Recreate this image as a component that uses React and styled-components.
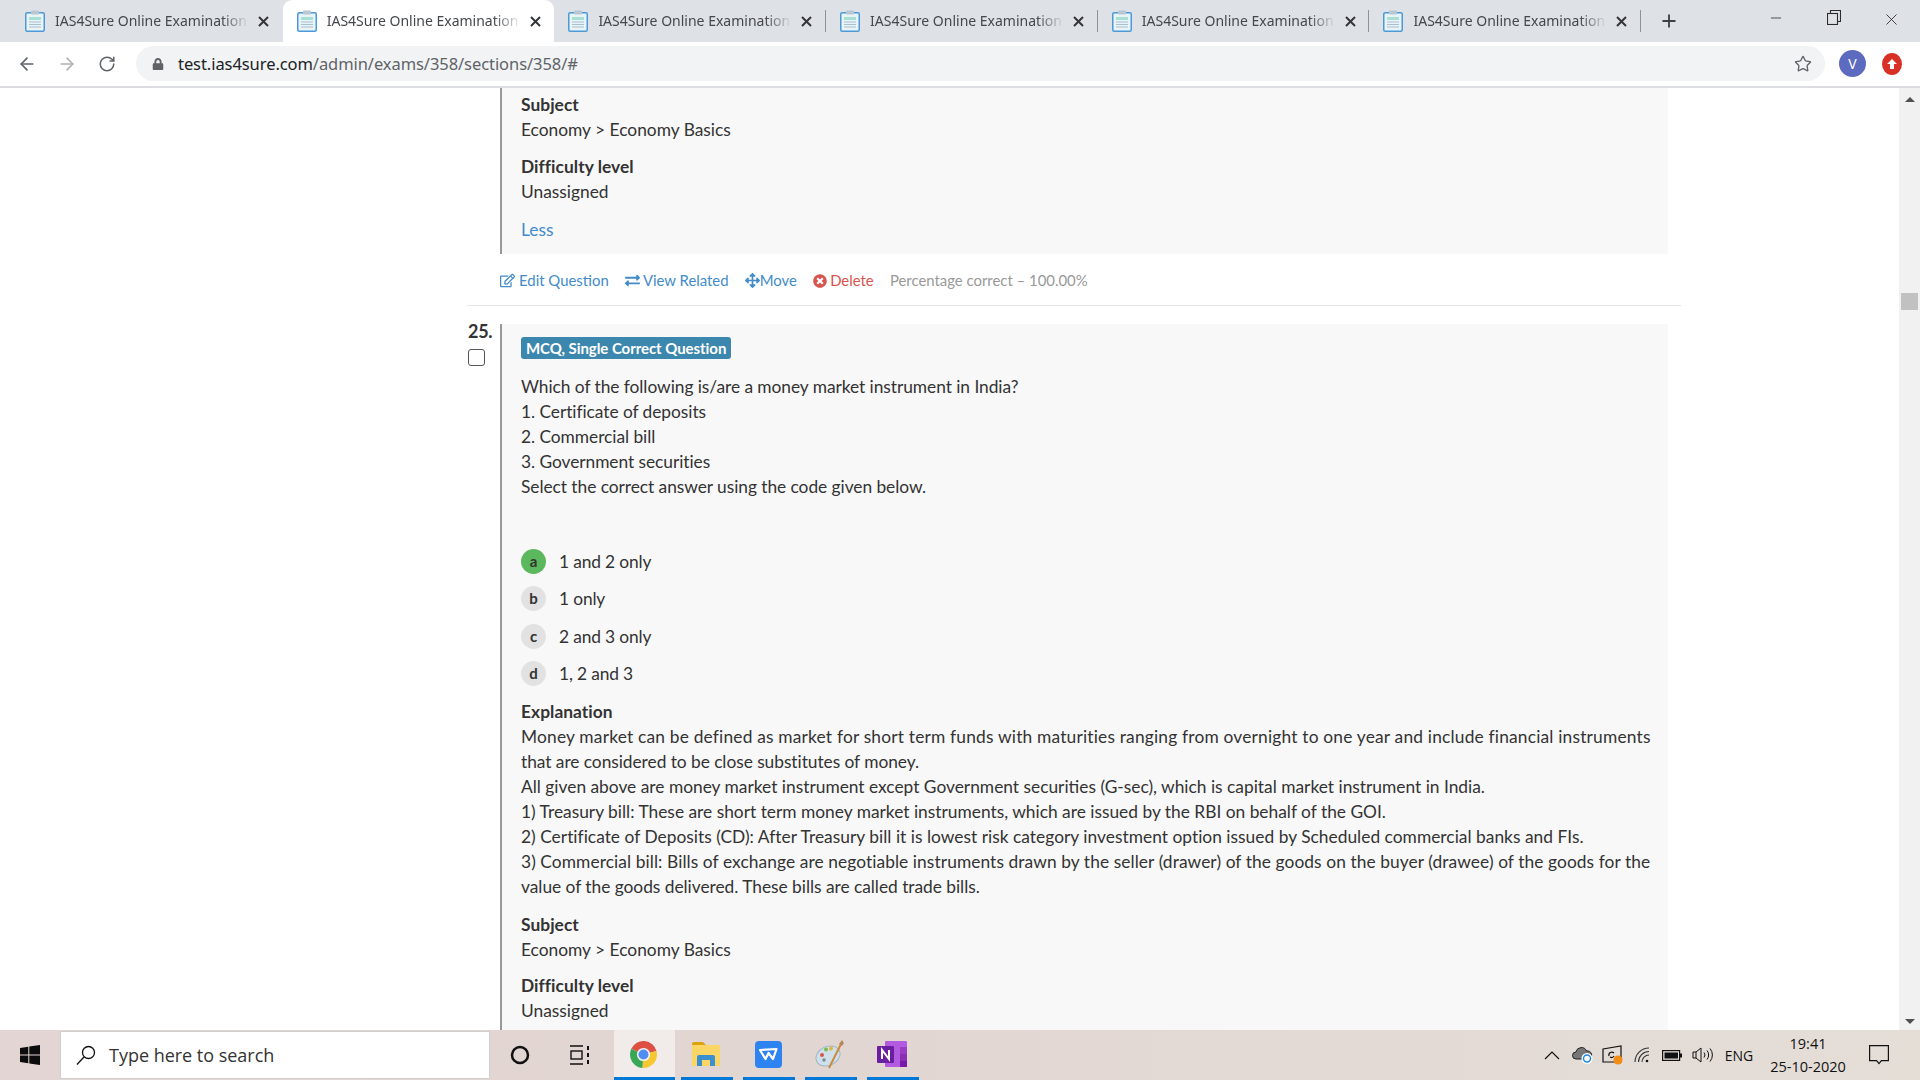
import React from 'react';
import styled, { createGlobalStyle } from 'styled-components';
import { ArrowLeft, ArrowRight, RotateCw, Star, Plus, X, Minus } from 'lucide-react';
import { FaLock, FaRegEdit, FaExchangeAlt, FaArrowsAlt, FaTimesCircle } from 'react-icons/fa';

const GlobalStyle = createGlobalStyle`
  html, body {
    margin: 0;
    height: 100%;
    overflow: hidden;
    background: #ffffff;
  }
  * { box-sizing: border-box; }
`;

const Screen = styled.div`
  width: 1920px;
  height: 1080px;
  display: flex;
  flex-direction: column;
  overflow: hidden;
  font-family: Lato, "Open Sans", sans-serif;
  color: #333333;
`;

/* browser chrome */
const TabStrip = styled.div`
  height: 42px;
  flex: none;
  display: flex;
  align-items: stretch;
  padding-left: 11px;
  background: #dee1e6;
`;

const Tab = styled.div`
  position: relative;
  width: 271.7px;
  flex: none;
  display: flex;
  align-items: center;
  padding-left: 14px;
  background: ${p => (p.$active ? '#ffffff' : 'transparent')};
  border-radius: 9px 9px 0 0;

  &:after {
    content: '';
    display: ${p => (p.$divider ? 'block' : 'none')};
    position: absolute;
    right: 0;
    top: 10px;
    height: 22px;
    width: 1px;
    background: #8f9296;
  }
`;

const TabTitle = styled.span`
  width: 194px;
  margin: -2px 0 0 10px;
  font-family: "Noto Sans", sans-serif;
  font-size: 14px;
  letter-spacing: 0;
  color: #45484c;
  white-space: nowrap;
  overflow: hidden;
  -webkit-mask-image: linear-gradient(to right, #000 86%, transparent 100%);
  mask-image: linear-gradient(to right, #000 86%, transparent 100%);
`;

const TabClose = styled.span`
  margin-left: 9px;
  display: flex;
  color: #333639;
`;

const NewTab = styled.div`
  width: 56px;
  display: flex;
  align-items: center;
  justify-content: center;
  color: #3c4043;
`;

const WindowControls = styled.div`
  margin-left: auto;
  display: flex;
`;

const WindowButton = styled.div`
  width: 57.5px;
  display: flex;
  align-items: flex-start;
  justify-content: center;
  padding-top: 10px;
  color: #2b2b2b;
`;

const Toolbar = styled.div`
  height: 46px;
  flex: none;
  display: flex;
  align-items: center;
  padding: 0 0 1px 7px;
  background: #ffffff;
  border-bottom: 2px solid #dadce0;
`;

const NavButton = styled.div`
  width: 40px;
  display: flex;
  justify-content: center;
  color: ${p => (p.$disabled ? '#b0b3b6' : '#5f6368')};
`;

const AddressBar = styled.div`
  width: 1689px;
  height: 35px;
  margin-left: 9px;
  display: flex;
  align-items: center;
  padding: 0 13px 0 16px;
  border-radius: 18px;
  background: #f1f3f4;
  color: #5f6368;
`;

const Url = styled.span`
  margin-left: 14px;
  font-family: "Noto Sans", sans-serif;
  font-size: 16.5px;
  letter-spacing: -0.07px;
  color: #5f6368;
  b {
    font-weight: 400;
    color: #202124;
  }
`;

const StarButton = styled.span`
  margin-left: auto;
  display: flex;
  color: #5f6368;
`;

const Avatar = styled.div`
  width: 27px;
  height: 27px;
  margin-left: 14px;
  border-radius: 50%;
  display: flex;
  align-items: center;
  justify-content: center;
  background: #5c6bc0;
  color: #ffffff;
  font-family: "Noto Sans", sans-serif;
  font-size: 14px;
`;

const UpdateBadge = styled.div`
  width: 20px;
  height: 22px;
  margin-left: 16px;
  border-radius: 50%;
  display: flex;
  align-items: center;
  justify-content: center;
  background: #d93025;
`;

/* page */
const Viewport = styled.div`
  flex: 1;
  min-height: 0;
  display: flex;
`;

const Page = styled.main`
  flex: 1;
  min-width: 0;
  overflow: hidden;
  padding: 0 218px 0 467px;
  background: #ffffff;
  font-size: 17.35px;
  line-height: 25px;
`;

const QuestionRow = styled.div`
  display: flex;
`;

const QuestionSide = styled.div`
  width: 33px;
  flex: none;
`;

const QuestionNumber = styled.div`
  font-weight: 700;
  font-size: 18px;
  line-height: 20px;
  margin: -3px 0 0 1px;
  letter-spacing: -0.3px;
`;

const SelectBox = styled.input`
  appearance: none;
  display: block;
  width: 17px;
  height: 17px;
  margin: 8px 0 0 1px;
  background: #ffffff;
  border: 1.5px solid #555555;
  border-radius: 3px;
`;

const QuestionPanel = styled.div`
  width: 1168px;
  flex: none;
  margin-left: ${p => (p.$bare ? 33 : 0)}px;
  padding: ${p => (p.$bare ? '4px 18px 12px 19px' : '13px 18px 40px 19px')};
  background: #f8f8f8;
  border-left: 2px solid #999999;
`;

const TypeBadge = styled.span`
  display: inline-block;
  height: 22px;
  padding: 0 5px;
  border-radius: 3px;
  background: #3c87ad;
  color: #ffffff;
  font-size: 15px;
  font-weight: 700;
  line-height: 22px;
  letter-spacing: -0.06px;
  vertical-align: top;
`;

const BadgeLine = styled.div`
  height: 22px;
`;

const Stem = styled.div`
  margin-top: 15px;
  margin-bottom: 49.5px;
  letter-spacing: -0.05px;
`;

const Line = styled.div`
  letter-spacing: ${p => p.$track ?? 'inherit'}${p => (p.$track === undefined ? '' : 'px')};
  white-space: nowrap;
`;

const Options = styled.div`
  display: flex;
  flex-direction: column;
  gap: 12.5px;
`;

const Option = styled.div`
  display: flex;
  align-items: center;
  height: 25px;
  letter-spacing: -0.15px;
`;

const OptionKey = styled.span`
  width: 25px;
  height: 25px;
  border-radius: 50%;
  display: flex;
  align-items: center;
  justify-content: center;
  margin-right: 13px;
  font-size: 15px;
  font-weight: 700;
  background: ${p => (p.$correct ? '#5cb85c' : '#e2e2e2')};
`;

const Section = styled.section`
  margin-top: ${p => p.$top ?? 11.8}px;
`;

const SectionTitle = styled.div`
  font-weight: 700;
  letter-spacing: 0.05px;
`;

const MoreLink = styled.a`
  display: block;
  margin-top: 13.3px;
  color: #428bca;
`;

const Actions = styled.div`
  display: flex;
  align-items: center;
  height: 25px;
  margin: 14px 0 12px 33px;
  font-size: 14.9px;
  gap: 16.2px;
`;

const ActionLink = styled.a`
  display: inline-flex;
  align-items: center;
  gap: ${p => p.$gap ?? 3}px;
  color: ${p => (p.$danger ? '#d9534f' : '#428bca')};
`;

const Stat = styled.span`
  color: #999999;
`;

const Separator = styled.hr`
  margin: 0 0 18px;
  border: 0;
  height: 1px;
  background: #e5e5e5;
`;

const Scrollbar = styled.div`
  width: 21px;
  flex: none;
  display: flex;
  flex-direction: column;
  align-items: center;
  background: #f1f1f1;
  padding: 9px 0 6px;
`;

const ScrollThumb = styled.div`
  width: 17px;
  height: 17px;
  margin-top: 191px;
  background: #c1c1c1;
`;

const ScrollArrow = styled.div`
  width: 0;
  height: 0;
  border-left: 5px solid transparent;
  border-right: 5px solid transparent;
  ${p => (p.$down
    ? 'border-top: 5px solid #505050; margin-top: auto;'
    : 'border-bottom: 5px solid #505050;')}
`;

/* windows taskbar */
const Taskbar = styled.footer`
  height: 50px;
  flex: none;
  display: flex;
  align-items: stretch;
  background: linear-gradient(to right, #e2d5d3 0%, #e2d6d3 45%, #e4ded7 100%);
  color: #111111;
`;

const StartButton = styled.div`
  width: 60px;
  display: flex;
  align-items: center;
  justify-content: center;
`;

const SearchBox = styled.div`
  width: 430px;
  margin: 1px 0;
  display: flex;
  align-items: center;
  gap: 13px;
  padding-left: 15px;
  background: #ffffff;
  border: 1px solid #cfcfcf;
  font-family: "Open Sans", sans-serif;
  font-size: 18px;
  letter-spacing: -0.02px;
  color: #333333;
`;

const ShellButton = styled.div`
  width: 60px;
  display: flex;
  align-items: center;
  justify-content: center;
`;

const AppSlots = styled.div`
  display: flex;
  margin-left: 4px;
`;

const AppSlot = styled.div`
  width: ${p => (p.$active ? 61 : 52)}px;
  margin-right: ${p => (p.$active ? 6 : 10)}px;
  display: flex;
  align-items: center;
  justify-content: center;
  padding: 1px 2px 0 0;
  background: ${p => (p.$active ? '#f1ebea' : 'transparent')};
  border-bottom: 3px solid #0078d7;
`;

const Tray = styled.div`
  margin-left: auto;
  padding-right: 17px;
  display: flex;
  align-items: stretch;
`;

const TrayIcon = styled.div`
  width: 30px;
  display: flex;
  align-items: center;
  justify-content: center;
`;

const Language = styled.div`
  width: 44px;
  display: flex;
  align-items: center;
  justify-content: center;
  font-family: "Open Sans", sans-serif;
  font-size: 14px;
`;

const Clock = styled.div`
  width: 94px;
  display: flex;
  flex-direction: column;
  align-items: center;
  justify-content: center;
  font-family: "Open Sans", sans-serif;
  font-size: 14.5px;
  line-height: 23px;
`;

const NotifyButton = styled.div`
  width: 48px;
  display: flex;
  align-items: center;
  justify-content: center;
`;

/* drawings */
const Favicon = () => (
  <svg width="20" height="22" viewBox="0 0 20 22" style={{ flex: 'none' }}>
    <rect x="0.75" y="2.75" width="18.5" height="18.5" rx="1.5" fill="#e8f3fa" stroke="#4b9ad6" strokeWidth="1.5" />
    <rect x="6" y="0.5" width="8" height="4" rx="1" fill="#b9c7d2" />
    <rect x="4" y="7" width="12" height="3" fill="#a6e0d0" />
    <path d="M4 12h12M4 14.5h12M4 17h12" stroke="#a9bfcc" strokeWidth="1" />
  </svg>
);

const CloseMark = () => (
  <svg width="11" height="11" viewBox="0 0 11 11">
    <path d="M1 1l9 9M10 1l-9 9" stroke="currentColor" strokeWidth="2" />
  </svg>
);

const RestoreIcon = () => (
  <svg width="14" height="15" viewBox="0 0 14 15" fill="none" stroke="#2b2b2b" strokeWidth="1.1">
    <rect x="0.5" y="3.5" width="10" height="11" />
    <path d="M3.5 3.5V0.5h10v11h-3" />
  </svg>
);

const sector = (a0, a1, r = 13.5) => {
  const rad = a => (a * Math.PI) / 180;
  const x0 = 13.5 + r * Math.cos(rad(a0));
  const y0 = 13.5 + r * Math.sin(rad(a0));
  const x1 = 13.5 + r * Math.cos(rad(a1));
  const y1 = 13.5 + r * Math.sin(rad(a1));
  return `M13.5 13.5L${x0} ${y0}A${r} ${r} 0 0 1 ${x1} ${y1}Z`;
};

const ChromeLogo = () => (
  <svg width="27" height="27" viewBox="0 0 27 27">
    <path d={sector(-155, -15)} fill="#dd5144" />
    <path d={sector(-15, 95)} fill="#f5c832" />
    <path d={sector(95, 205)} fill="#3aa757" />
    <circle cx="13.5" cy="13.5" r="6.6" fill="#f3f3f3" />
    <circle cx="13.5" cy="13.5" r="5" fill="#4f8df0" />
  </svg>
);

const FolderLogo = () => (
  <svg width="28" height="26" viewBox="0 0 28 26">
    <path d="M0 3a2 2 0 0 1 2-2h9l3 3H0z" fill="#dca20f" />
    <rect x="0" y="4" width="28" height="21" fill="#fbd664" />
    <path d="M5 25V16a2 2 0 0 1 2-2h14a2 2 0 0 1 2 2v9h-5v-6h-8v6z" fill="#3a8fd0" />
  </svg>
);

const WpsLogo = () => (
  <svg width="27" height="27" viewBox="0 0 27 27">
    <rect width="27" height="27" rx="4" fill="#2d83f0" />
    <path d="M5 9l16.5-1-3.500 10-4.500-6-3 6z" fill="none" stroke="#ffffff" strokeWidth="2.200" strokeLinejoin="round" />
  </svg>
);

const PaletteLogo = () => (
  <svg width="30" height="30" viewBox="0 0 30 30">
    <ellipse cx="13" cy="17" rx="12.500" ry="9.500" transform="rotate(-25 13 17)" fill="#cfe0ea" stroke="#9fb4c2" />
    <circle cx="7" cy="16" r="2" fill="#d9534f" />
    <circle cx="11" cy="10.500" r="2" fill="#7fb84e" />
    <circle cx="16" cy="9.500" r="2" fill="#e5b53a" />
    <circle cx="9" cy="21" r="1.800" fill="#7f8c96" />
    <path d="M14 29L26 5" stroke="#c98a3c" strokeWidth="2" />
    <path d="M24 5l3-4 2 3-2 3z" fill="#b58a58" />
  </svg>
);

const OneNoteLogo = () => (
  <svg width="30" height="26" viewBox="0 0 30 26">
    <rect x="8" y="0" width="22" height="26" rx="1" fill="#b25ae0" />
    <rect x="23" y="6" width="7" height="7" fill="#9a3dc4" />
    <rect x="23" y="13" width="7" height="6.500" fill="#8a2fb3" />
    <rect x="23" y="19.500" width="7" height="6.500" fill="#7719aa" />
    <rect x="0" y="5" width="17" height="17" rx="1" fill="#6b1ea0" />
    <path d="M5 18V9l7 9V9" fill="none" stroke="#ffffff" strokeWidth="2" />
  </svg>
);

const WindowsLogo = () => (
  <svg width="20" height="20" viewBox="0 0 20 20" fill="#0c0c0c">
    <path d="M0 3l8.300-1.200v7.700H0zM9.300 1.600L20 0v9.500H9.300zM0 10.500h8.300v7.700L0 17zM9.300 10.500H20V20L9.300 18.400z" />
  </svg>
);

const SearchGlass = () => (
  <svg width="20" height="20" viewBox="0 0 20 20" fill="none" stroke="#111111" strokeWidth="1.300">
    <circle cx="12.500" cy="7.500" r="6" />
    <path d="M8 12L1 19.500" />
  </svg>
);

const TaskViewIcon = () => (
  <svg width="20" height="20" viewBox="0 0 20 20" fill="none" stroke="#111111" strokeWidth="1.400">
    <path d="M0 1h13M0 19h13" />
    <rect x="1" y="6" width="11" height="8" />
    <path d="M18 1v4M18 8v4M18 15v4" strokeWidth="2" />
  </svg>
);

const ChevronUp = () => (
  <svg width="16" height="10" viewBox="0 0 16 10" fill="none" stroke="#111111" strokeWidth="1.200">
    <path d="M1 9l7-7 7 7" />
  </svg>
);

const CloudIcon = () => (
  <svg width="21" height="18" viewBox="0 0 21 18">
    <path d="M4 13a3.500 3.500 0 0 1 0-7 5.500 5.500 0 0 1 10.500-1 4 4 0 0 1 2 8z" fill="#777777" stroke="#222222" />
    <circle cx="15" cy="12.500" r="5.500" fill="#ffffff" />
    <circle cx="15" cy="12.500" r="3.500" fill="none" stroke="#1e88e5" strokeWidth="1.500" />
  </svg>
);

const SyncIcon = () => (
  <svg width="21" height="20" viewBox="0 0 21 20">
    <path d="M1 4l18-3v16H1z" fill="none" stroke="#111111" strokeWidth="1.200" />
    <path d="M7 11a3 3 0 0 1 5-3M12 11a3 3 0 0 1-4 1" fill="none" stroke="#111111" strokeWidth="1.200" />
    <circle cx="16" cy="15" r="4.500" fill="#f28c13" />
  </svg>
);

const WifiIcon = () => (
  <svg width="16" height="16" viewBox="0 0 16 16" fill="none" stroke="#333333" strokeWidth="1.100">
    <path d="M1 15A14 14 0 0 1 15 1M4.500 15A10.500 10.500 0 0 1 15 4.500M8 15a7 7 0 0 1 7-7" />
    <circle cx="13" cy="14" r="1.300" fill="#111111" stroke="none" />
  </svg>
);

const BatteryIcon = () => (
  <svg width="20" height="11" viewBox="0 0 20 11">
    <rect x="0.600" y="0.600" width="17" height="9.800" fill="none" stroke="#111111" strokeWidth="1.200" />
    <rect x="2.500" y="2.500" width="13.500" height="6" fill="#111111" />
    <rect x="18" y="3.500" width="2" height="4" fill="#111111" />
  </svg>
);

const VolumeIcon = () => (
  <svg width="21" height="16" viewBox="0 0 21 16" fill="none" stroke="#111111" strokeWidth="1">
    <path d="M1 5h3l5-4v14l-5-4H1zM4 5v6" />
    <path d="M12 5.500a4 4 0 0 1 0 5M15 3.500a7 7 0 0 1 0 9M18 1.500a10 10 0 0 1 0 13" />
  </svg>
);

const NotifyIcon = () => (
  <svg width="20" height="20" viewBox="0 0 20 20" fill="none" stroke="#111111" strokeWidth="1.200">
    <path d="M0.600 0.600h18.800v15h-7l-2.400 3-2.400-3h-7z" />
  </svg>
);

const SubjectBlock = () => (
  <>
    <Section $top={0}>
      <SectionTitle>Subject</SectionTitle>
      <Line>Economy &gt; Economy Basics</Line>
    </Section>
    <Section>
      <SectionTitle>Difficulty level</SectionTitle>
      <Line>Unassigned</Line>
    </Section>
  </>
);

const tabs = [0, 1, 2, 3, 4, 5];

const options = [
  { key: 'a', text: '1 and 2 only', correct: true },
  { key: 'b', text: '1 only' },
  { key: 'c', text: '2 and 3 only' },
  { key: 'd', text: '1, 2 and 3' },
];

const explanation = [
  { text: 'Money market can be defined as market for short term funds with maturities ranging from overnight to one year and include financial instruments', track: 0.19 },
  { text: 'that are considered to be close substitutes of money.', track: -0.05 },
  { text: 'All given above are money market instrument except Government securities (G-sec), which is capital market instrument in India.', track: 0 },
  { text: '1) Treasury bill: These are short term money market instruments, which are issued by the RBI on behalf of the GOI.', track: 0 },
  { text: '2) Certificate of Deposits (CD): After Treasury bill it is lowest risk category investment option issued by Scheduled commercial banks and FIs.', track: 0.02 },
  { text: '3) Commercial bill: Bills of exchange are negotiable instruments drawn by the seller (drawer) of the goods on the buyer (drawee) of the goods for the', track: 0.08 },
  { text: 'value of the goods delivered. These bills are called trade bills.', track: -0.03 },
];

export default function App() {
  return (
    <Screen>
      <GlobalStyle />
      <TabStrip>
        {tabs.map(i => (
          <Tab key={i} $active={i === 1} $divider={i > 1}>
            <Favicon />
            <TabTitle>IAS4Sure Online Examination</TabTitle>
            <TabClose><CloseMark /></TabClose>
          </Tab>
        ))}
        <NewTab><Plus size={20} strokeWidth={2.2} /></NewTab>
        <WindowControls>
          <WindowButton><Minus size={16} strokeWidth={1.2} /></WindowButton>
          <WindowButton><RestoreIcon /></WindowButton>
          <WindowButton><X size={19} strokeWidth={1.1} /></WindowButton>
        </WindowControls>
      </TabStrip>

      <Toolbar>
        <NavButton><ArrowLeft size={20} strokeWidth={2} /></NavButton>
        <NavButton $disabled><ArrowRight size={20} strokeWidth={2} /></NavButton>
        <NavButton><RotateCw size={18} strokeWidth={2} /></NavButton>
        <AddressBar>
          <FaLock size={12} />
          <Url><b>test.ias4sure.com</b>/admin/exams/358/sections/358/#</Url>
          <StarButton><Star size={18} strokeWidth={1.8} /></StarButton>
        </AddressBar>
        <Avatar>V</Avatar>
        <UpdateBadge>
          <svg width="12" height="12" viewBox="0 0 12 12"><path d="M6 1l5 5H8v5H4V6H1z" fill="#ffffff" /></svg>
        </UpdateBadge>
      </Toolbar>

      <Viewport>
        <Page>
          <QuestionPanel $bare>
            <SubjectBlock />
            <MoreLink>Less</MoreLink>
          </QuestionPanel>

          <Actions>
            <ActionLink $gap={4}><FaRegEdit size={15} />Edit Question</ActionLink>
            <ActionLink><FaExchangeAlt size={15} />View Related</ActionLink>
            <ActionLink $gap={0}><FaArrowsAlt size={15} />Move</ActionLink>
            <ActionLink $danger><FaTimesCircle size={14} />Delete</ActionLink>
            <Stat>Percentage correct – 100.00%</Stat>
          </Actions>
          <Separator />

          <QuestionRow>
            <QuestionSide>
              <QuestionNumber>25.</QuestionNumber>
              <SelectBox type="checkbox" />
            </QuestionSide>
            <QuestionPanel>
              <BadgeLine><TypeBadge>MCQ, Single Correct Question</TypeBadge></BadgeLine>
              <Stem>
                <Line>Which of the following is/are a money market instrument in India?</Line>
                <Line>1. Certificate of deposits</Line>
                <Line>2. Commercial bill</Line>
                <Line>3. Government securities</Line>
                <Line>Select the correct answer using the code given below.</Line>
              </Stem>
              <Options>
                {options.map(o => (
                  <Option key={o.key}>
                    <OptionKey $correct={o.correct}>{o.key}</OptionKey>
                    {o.text}
                  </Option>
                ))}
              </Options>
              <Section $top={13}>
                <SectionTitle>Explanation</SectionTitle>
                {explanation.map(l => <Line key={l.text} $track={l.track}>{l.text}</Line>)}
              </Section>
              <Section $top={12.5}><SubjectBlock /></Section>
            </QuestionPanel>
          </QuestionRow>
        </Page>
        <Scrollbar>
          <ScrollArrow />
          <ScrollThumb />
          <ScrollArrow $down />
        </Scrollbar>
      </Viewport>

      <Taskbar>
        <StartButton><WindowsLogo /></StartButton>
        <SearchBox><SearchGlass />Type here to search</SearchBox>
        <ShellButton>
          <svg width="20" height="20" viewBox="0 0 20 20"><circle cx="10" cy="10" r="8" fill="none" stroke="#111111" strokeWidth="2.500" /></svg>
        </ShellButton>
        <ShellButton><TaskViewIcon /></ShellButton>
        <AppSlots>
          <AppSlot $active><ChromeLogo /></AppSlot>
          <AppSlot><FolderLogo /></AppSlot>
          <AppSlot><WpsLogo /></AppSlot>
          <AppSlot><PaletteLogo /></AppSlot>
          <AppSlot><OneNoteLogo /></AppSlot>
        </AppSlots>
        <Tray>
          <TrayIcon><ChevronUp /></TrayIcon>
          <TrayIcon><CloudIcon /></TrayIcon>
          <TrayIcon><SyncIcon /></TrayIcon>
          <TrayIcon><WifiIcon /></TrayIcon>
          <TrayIcon><BatteryIcon /></TrayIcon>
          <TrayIcon><VolumeIcon /></TrayIcon>
          <Language>ENG</Language>
          <Clock><span>19:41</span><span>25-10-2020</span></Clock>
          <NotifyButton><NotifyIcon /></NotifyButton>
        </Tray>
      </Taskbar>
    </Screen>
  );
}
